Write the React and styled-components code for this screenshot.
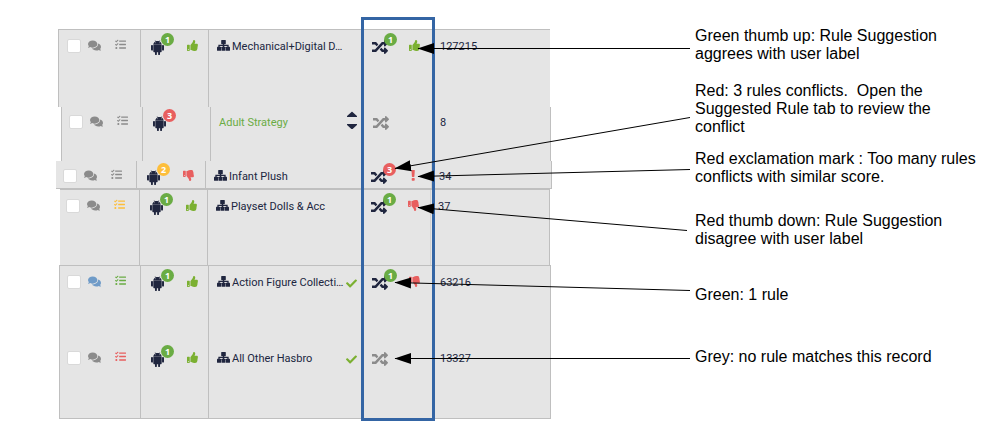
import React from "react";
import styled, { createGlobalStyle, css } from "styled-components";
import {
  FaCaretDown,
  FaCaretUp,
  FaCheck,
  FaComments,
  FaRandom,
  FaTasks,
  FaThumbsDown,
  FaThumbsUp,
} from "react-icons/fa";

const color = {
  navy: "#20263f",
  grey: "#8b8b8b",
  green: "#6aac44",
  lime: "#7bb031",
  red: "#e85f5f",
  amber: "#fdbe3b",
  blue: "#6f9bc8",
  line: "#bfbfbf",
  faint: "#d2d2d2",
  panel: "#e5e5e5",
  frame: "#3465a4",
};

const GlobalStyle = createGlobalStyle`
  *, *::before, *::after { box-sizing: border-box; }
  body { margin: 0; background: #fff; }
`;

const Page = styled.main`
  position: relative;
  display: flex;
  align-items: flex-start;
  gap: 143px;
  min-height: 432px;
  padding: 27px 24px 12px 56px;
`;

const Panel = styled.div`
  position: relative;
  flex: none;
  width: 496px;
  padding-top: 2px;
`;

const Records = styled.table`
  display: block;
  font: 11px/16px Roboto, "Noto Sans", sans-serif;
  color: ${color.navy};
`;

const Strip = styled.tbody`
  display: block;
  margin-left: ${(p) => p.$inset}px;
  width: ${(p) => p.$width}px;
  background: ${color.panel};
  border: 0 solid ${color.line};
  border-width: ${(p) => p.$edges};
`;

const Row = styled.tr`
  display: grid;
  grid-template-columns: ${(p) => p.$columns};
  height: ${(p) => p.$height}px;
`;

const Cell = styled.td`
  display: flex;
  align-items: flex-start;
  padding: ${(p) => p.$top}px 0 0;
`;

const SelectCell = styled(Cell)`
  justify-content: flex-end;
  padding-right: 14px;
`;

const ModelCell = styled(Cell)`
  gap: 23px;
  padding-left: 10px;
  border-left: 1px solid ${color.line};
`;

const LabelCell = styled(Cell)`
  justify-content: space-between;
  padding-left: 8px;
  padding-right: 5px;
  border-left: 1px solid ${color.line};
`;

const RuleCell = styled(Cell)`
  gap: 21px;
  padding-left: 10px;
`;

const CountCell = styled(Cell)`
  padding-left: 7px;
  border-left: 1px solid ${color.faint};
`;

const Tick = styled.input`
  appearance: none;
  width: 14px;
  height: 14px;
  margin: 0;
  background: #fff;
  border: 1px solid #d9d9d9;
  border-radius: 2px;
`;

const glyph = css`
  display: block;
  flex: none;
  color: ${(p) => color[p.$tone] || color.navy};
`;

const Glyph = styled.span`
  ${glyph}
  width: ${(p) => p.$size}px;
  margin-top: ${(p) => p.$drop || 0}px;
  svg { display: block; width: 100%; height: auto; }
`;

const CommentGlyph = styled(Glyph)`
  margin: 0 14px 0 7px;
`;

const Badged = styled.span`
  ${glyph}
  position: relative;
  width: ${(p) => p.$size}px;
  height: 14px;
  svg { display: block; width: 100%; height: auto; }
`;

const ModelGlyph = styled(Badged)`
  margin-top: 1px;
`;

const Badge = styled.span`
  position: absolute;
  top: ${(p) => p.$top}px;
  left: ${(p) => p.$left}px;
  width: 13px;
  height: 13px;
  border-radius: 7px;
  background: ${(p) => color[p.$tone]};
  color: #fff;
  font-family: "Open Sans", sans-serif;
  font-size: 9px;
  font-weight: 700;
  line-height: 13px;
  text-align: center;
`;

const Name = styled.span`
  display: flex;
  gap: 2px;
  white-space: nowrap;
  color: ${(p) => (p.$editing ? color.green : color.navy)};
`;

const Text = styled.span`
  display: block;
`;

const SortButton = styled.button`
  display: flex;
  flex-direction: column;
  gap: 6px;
  margin: -4px 1px 0 0;
  padding: 0;
  border: 0;
  background: none;
  color: ${color.navy};
  svg { display: block; width: 10px; height: 6px; }
`;

const Highlight = styled.div`
  position: absolute;
  top: -10px;
  bottom: -2px;
  left: 305px;
  width: 74px;
  border: 3px solid ${color.frame};
`;

const Arrows = styled.svg`
  position: absolute;
  top: 0;
  left: 0;
  width: 700px;
  height: 432px;
  pointer-events: none;
`;

const Notes = styled.aside`
  flex: 1;
  min-width: 0;
  max-width: 290px;
  font: 16px/18px "Liberation Sans", Arial, sans-serif;
  color: #000;
`;

const Note = styled.p`
  margin: 0 0 ${(p) => p.$after || 0}px;
  white-space: pre-line;
`;

function Android() {
  return (
    <svg viewBox="32 32 384 448" fill="currentColor" aria-hidden="true">
      <path d="M89.6 204.5v115.8c0 15.4-12.1 27.7-27.5 27.7-15.3 0-30.1-12.4-30.1-27.7V204.5c0-15.1 14.8-27.5 30.1-27.5 15.1 0 27.5 12.4 27.5 27.5zm10.8 157c0 16.4 13.2 29.6 29.6 29.6h19.9l.3 61.1c0 36.9 55.2 36.6 55.2 0v-61.1h37.2v61.1c0 36.7 55.5 36.8 55.5 0v-61.1h20.2c16.2 0 29.4-13.2 29.4-29.6V182.1H100.4v179.4zm248-189.1H99.3c0-42.8 25.6-80 63.6-99.4l-19.1-35.3c-2.8-4.9 4.3-8 6.7-3.8l19.4 35.6c34.9-15.5 75-14.7 108.3 0L297.5 34c2.5-4.3 9.5-1.1 6.7 3.8L285.1 73c37.7 19.4 63.3 56.6 63.3 99.4zm-170.7-55.5c0-5.7-4.6-10.5-10.5-10.5-5.7 0-10.2 4.8-10.2 10.5s4.6 10.5 10.2 10.5c5.9 0 10.5-4.8 10.5-10.5zm113.4 0c0-5.7-4.6-10.5-10.2-10.5-5.9 0-10.5 4.8-10.5 10.5s4.6 10.5 10.5 10.5c5.6 0 10.2-4.8 10.2-10.5zm94.8 60.1c-15.1 0-27.5 12.1-27.5 27.5v115.8c0 15.4 12.4 27.7 27.5 27.7 15.4 0 30.1-12.4 30.1-27.7V204.5c0-15.4-14.8-27.5-30.1-27.5z" />
    </svg>
  );
}

function Tree() {
  return (
    <svg viewBox="0 0 13 11" fill="currentColor" aria-hidden="true">
      <rect x="4.2" y="0" width="4.6" height="4.2" rx="0.6" />
      <rect x="0" y="6.7" width="4.1" height="4.1" rx="0.6" />
      <rect x="4.5" y="6.7" width="4" height="4.1" rx="0.6" />
      <rect x="8.9" y="6.7" width="4.1" height="4.1" rx="0.6" />
      <path d="M2 7V5.4H11V7M6.5 3.5V7.5" fill="none" stroke="currentColor" strokeWidth="1.3" />
    </svg>
  );
}

function Exclamation() {
  return (
    <svg viewBox="0 0 11 11" fill="currentColor" aria-hidden="true">
      <path d="M3.5 0.3Q3.5 0 3.8 0H6.5Q6.8 0 6.8 0.3L6.4 6.6Q6.4 7 6 7H4.3Q3.9 7 3.9 6.6Z" />
      <rect x="3.7" y="8" width="3" height="2.8" rx="0.7" />
    </svg>
  );
}

const verdicts = {
  up: { Icon: FaThumbsUp, tone: "lime" },
  down: { Icon: FaThumbsDown, tone: "red" },
  alert: { Icon: Exclamation, tone: "red" },
};

function Verdict({ kind }) {
  const verdict = verdicts[kind];
  if (!verdict) return null;
  const { Icon, tone } = verdict;
  return (
    <Glyph $tone={tone} $size={11} $drop={1}>
      <Icon />
    </Glyph>
  );
}

const strips = [
  {
    inset: 2, width: 492, edges: "1px 0 0 1px", columns: "81px 68px 154px 70px 1fr", top: 9, height: 77,
    rows: [
      { comments: "grey", tasks: "grey", model: ["1", "green"], modelVerdict: "up", name: "Mechanical+Digital D…", rules: ["1", "green"], ruleVerdict: "up", count: "127215" },
    ],
  },
  {
    inset: 5, width: 490, edges: "0 1px 0 1px", columns: "80px 68px 153px 69px 1fr", top: 8, height: 54,
    rows: [
      { comments: "grey", tasks: "grey", model: ["3", "red"], name: "Adult Strategy", editing: true, count: "8" },
    ],
  },
  {
    inset: 0, width: 496, edges: "0 1px 1px 0", columns: "80px 69px 156px 70px 1fr", top: 8, height: 27,
    rows: [
      { comments: "grey", tasks: "grey", model: ["2", "amber"], modelVerdict: "down", name: "Infant Plush", rules: ["3", "red"], ruleVerdict: "alert", count: "34" },
    ],
  },
  {
    inset: 4, width: 490, edges: "1px 1px 0 0", columns: "79px 68px 154px 69px 1fr", top: 9, height: 75,
    rows: [
      { comments: "grey", tasks: "amber", model: ["1", "green"], modelVerdict: "up", name: "Playset Dolls & Acc", rules: ["1", "green"], ruleVerdict: "down", count: "37" },
    ],
  },
  {
    inset: 3, width: 492, edges: "1px", columns: "80px 68px 154px 70px 1fr", top: 9, height: 76,
    rows: [
      { comments: "blue", tasks: "green", model: ["1", "green"], modelVerdict: "up", name: "Action Figure Collecti…", checked: true, rules: ["1", "green"], ruleVerdict: "down", count: "63216" },
      { comments: "grey", tasks: "red", model: ["1", "green"], modelVerdict: "up", name: "All Other Hasbro", checked: true, count: "13327" },
    ],
  },
];

function Record({ record, strip }) {
  const { top } = strip;
  return (
    <Row $columns={strip.columns} $height={strip.height}>
      <SelectCell $top={top}>
        <Tick type="checkbox" aria-label={`Select ${record.name}`} />
        <CommentGlyph $tone={record.comments} $size={13}><FaComments /></CommentGlyph>
        <Glyph $tone={record.tasks} $size={11}><FaTasks /></Glyph>
      </SelectCell>
      <ModelCell $top={top}>
        <ModelGlyph $size={13}>
          <Android />
          <Badge $tone={record.model[1]} $top={-7} $left={10}>{record.model[0]}</Badge>
        </ModelGlyph>
        <Verdict kind={record.modelVerdict} />
      </ModelCell>
      <LabelCell $top={top}>
        <Name $editing={record.editing}>
          {!record.editing && <Glyph $size={13} $drop={1}><Tree /></Glyph>}
          <Text>{record.name}</Text>
        </Name>
        {record.checked && <Glyph $tone="lime" $size={11} $drop={3}><FaCheck /></Glyph>}
        {record.editing && (
          <SortButton type="button" aria-label="Change label">
            <FaCaretUp viewBox="16 160 288 192" preserveAspectRatio="none" />
            <FaCaretDown viewBox="16 160 288 192" preserveAspectRatio="none" />
          </SortButton>
        )}
      </LabelCell>
      <RuleCell $top={top}>
        <Badged $tone={record.rules ? "navy" : "grey"} $size={16}>
          <FaRandom />
          {record.rules && <Badge $tone={record.rules[1]} $top={-6} $left={12}>{record.rules[0]}</Badge>}
        </Badged>
        <Verdict kind={record.ruleVerdict} />
      </RuleCell>
      <CountCell $top={top}>
        <Text>{record.count}</Text>
      </CountCell>
    </Row>
  );
}

const notes = [
  { text: "Green thumb up: Rule Suggestion\naggrees with user label", after: 19 },
  { text: "Red: 3 rules conflicts. \u00a0Open the\nSuggested Rule tab to review the\nconflict", after: 14 },
  { text: "Red exclamation mark : Too many rules\nconflicts with similar score.", after: 26 },
  { text: "Red thumb down: Rule Suggestion\ndisagree with user label", after: 38 },
  { text: "Green: 1 rule", after: 44 },
  { text: "Grey: no rule matches this record" },
];

const arrows = [
  [690, 48, 418, 48],
  [690, 117, 395, 168],
  [690, 169, 418, 176],
  [687, 230, 418, 207],
  [690, 290, 395, 282],
  [690, 358, 395, 358],
];

export default function App() {
  return (
    <>
      <GlobalStyle />
      <Page>
        <Panel>
          <Records>
            {strips.map((strip, i) => (
              <Strip key={i} $inset={strip.inset} $width={strip.width} $edges={strip.edges}>
                {strip.rows.map((record) => (
                  <Record key={record.name} record={record} strip={strip} />
                ))}
              </Strip>
            ))}
          </Records>
          <Highlight />
        </Panel>
        <Notes>
          {notes.map((note) => (
            <Note key={note.text} $after={note.after}>{note.text}</Note>
          ))}
        </Notes>
        <Arrows viewBox="0 0 700 432" aria-hidden="true">
          <defs>
            <marker id="head" markerUnits="userSpaceOnUse" markerWidth="18" markerHeight="12" refX="16" refY="6" orient="auto">
              <path d="M0 0.5L16.5 6L0 11.5Z" />
            </marker>
          </defs>
          {arrows.map(([x1, y1, x2, y2]) => (
            <line key={y1} x1={x1} y1={y1 + 0.5} x2={x2} y2={y2 + 0.5} stroke="#000" strokeWidth="1" markerEnd="url(#head)" />
          ))}
        </Arrows>
      </Page>
    </>
  );
}
